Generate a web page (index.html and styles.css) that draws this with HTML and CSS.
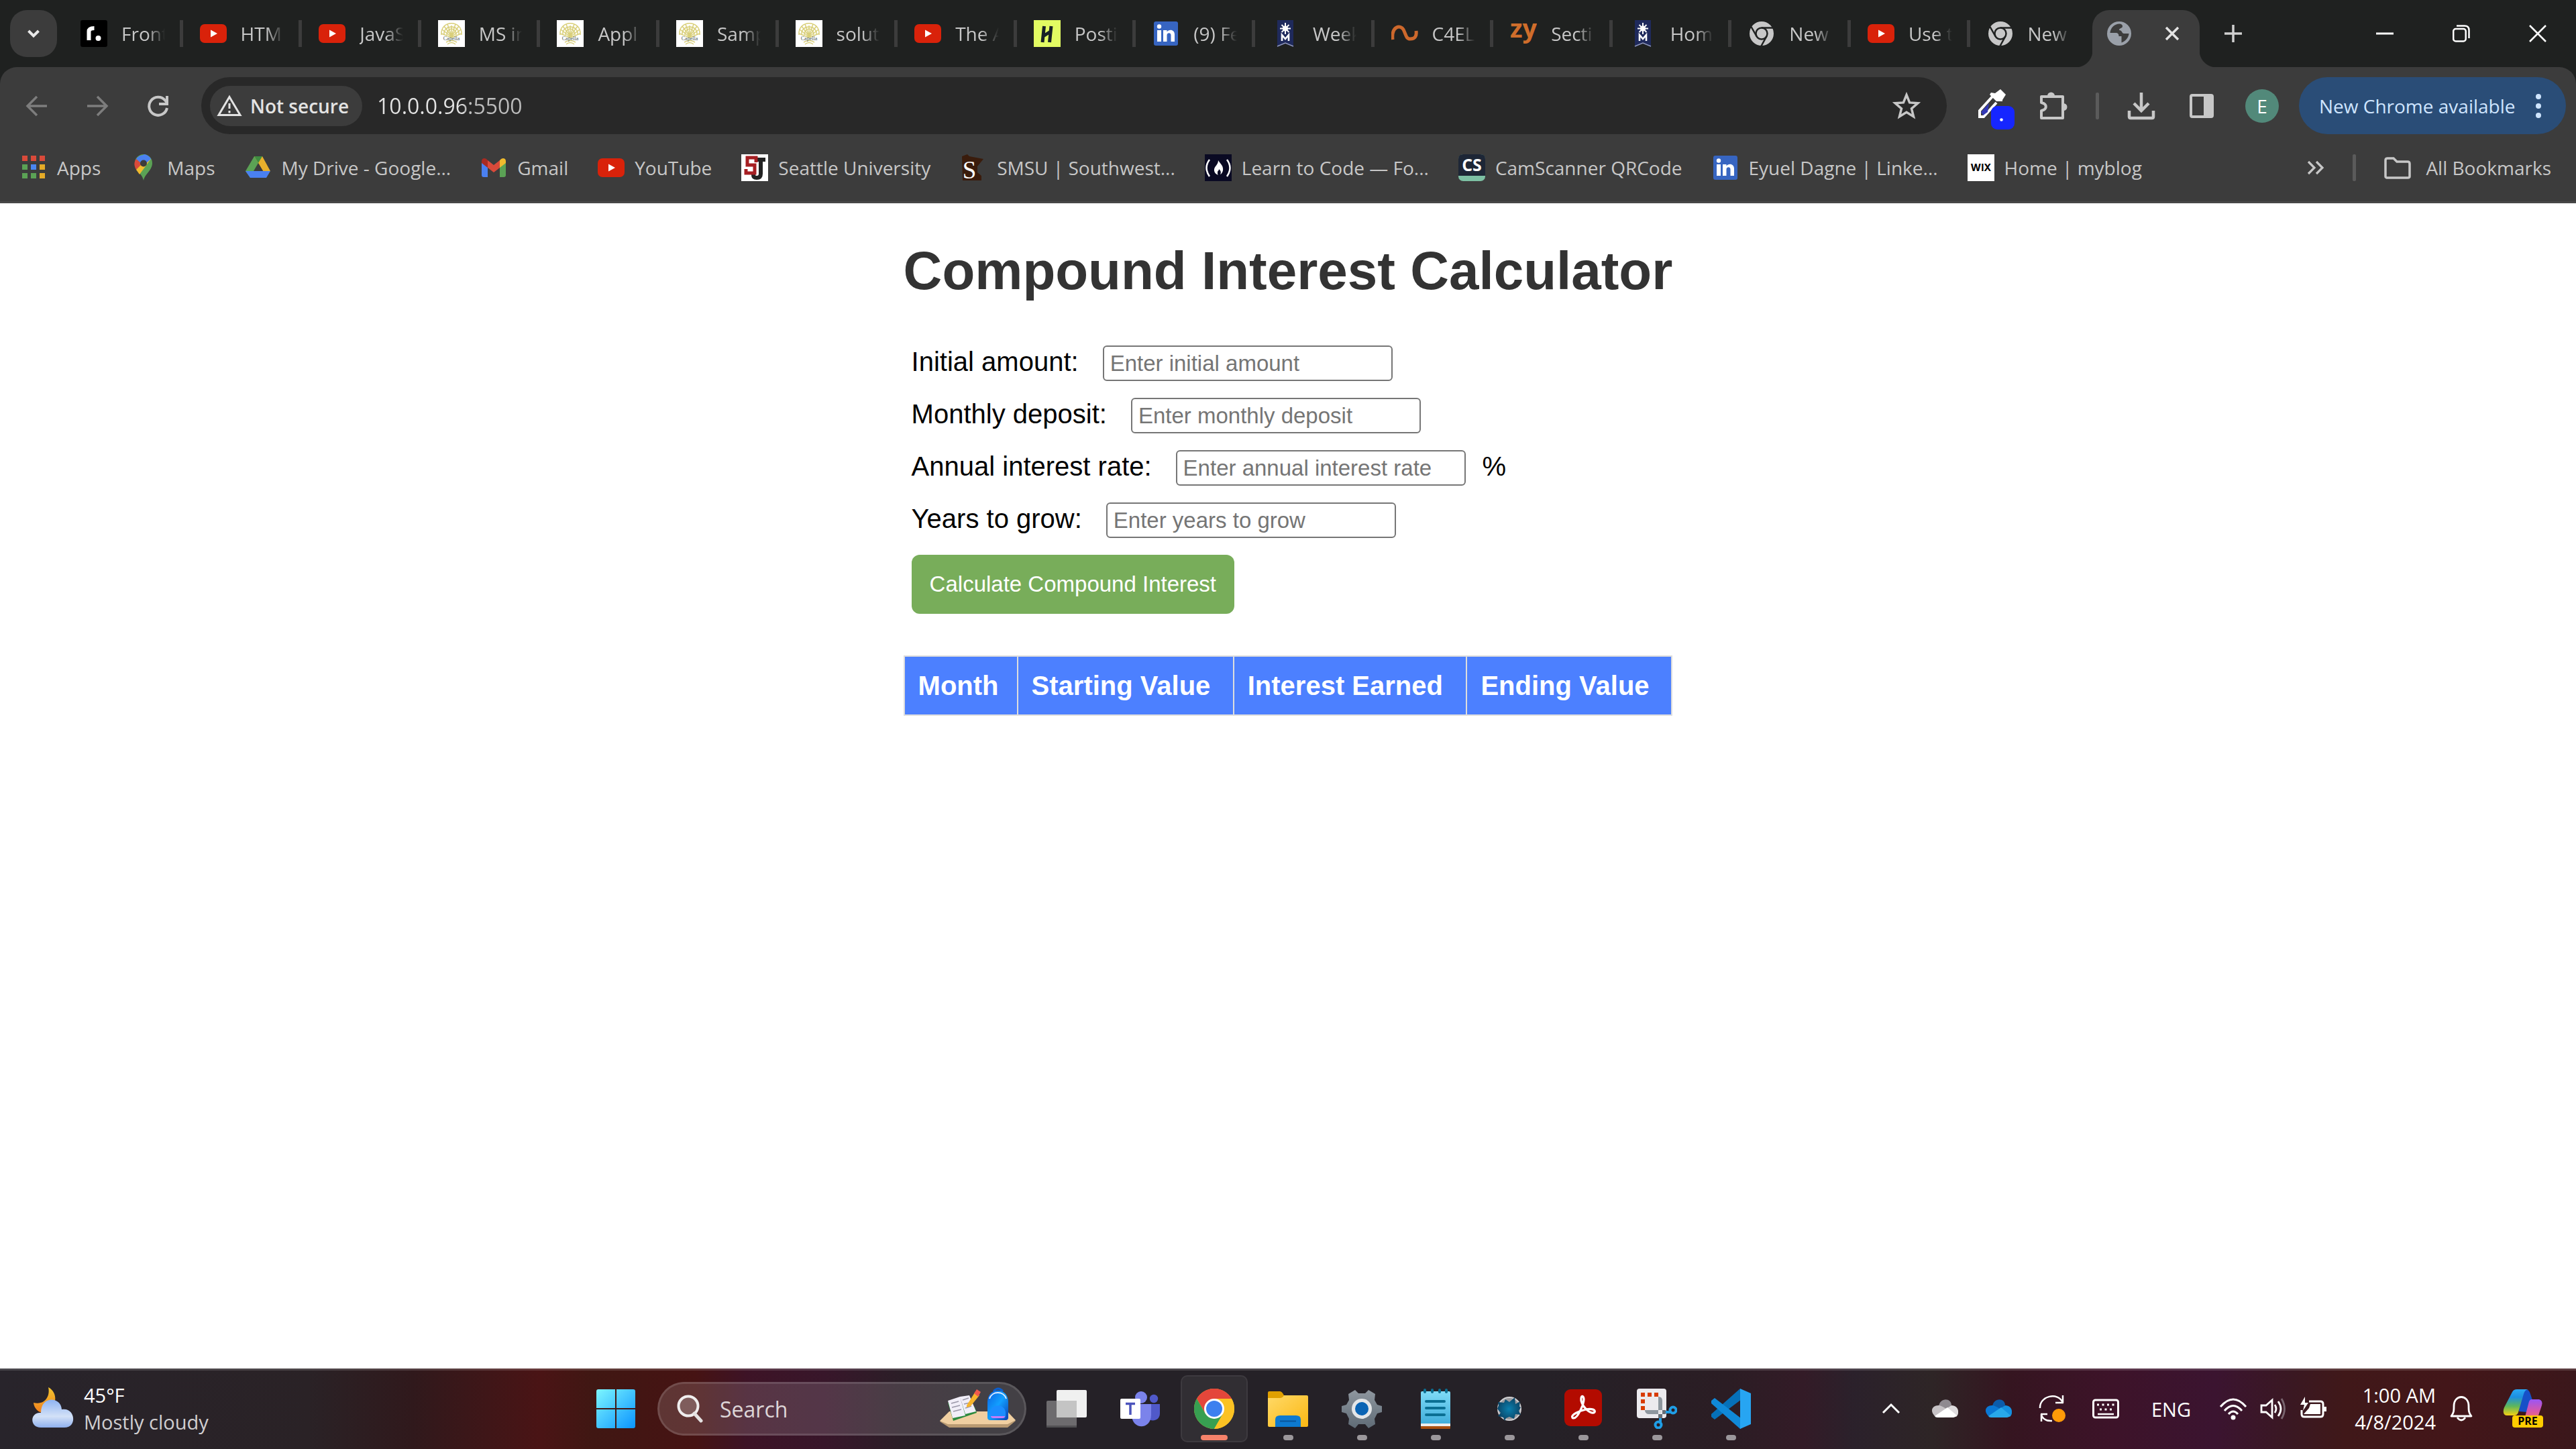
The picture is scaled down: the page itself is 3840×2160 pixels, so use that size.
FILE: index.html
```html
<!DOCTYPE html>
<html lang="en">
<head>
<meta charset="utf-8">
<title>Compound Interest Calculator</title>
<link rel="stylesheet" href="styles.css">
</head>
<body>
<svg class="defs" width="0" height="0" aria-hidden="true">
  <defs>
    <linearGradient id="gWin" x1="0" y1="0" x2="1" y2="1"><stop offset="0" stop-color="#7df6ff"/><stop offset="1" stop-color="#0a94ff"/></linearGradient>
    <linearGradient id="gCloud" x1="0" y1="0" x2="0" y2="1"><stop offset="0" stop-color="#8fb4f2"/><stop offset=".6" stop-color="#d3e1f7"/><stop offset="1" stop-color="#8fb0ee"/></linearGradient>
    <linearGradient id="gMoon" x1="0" y1="0" x2="0" y2="1"><stop offset="0" stop-color="#f3c530"/><stop offset="1" stop-color="#ef7d1c"/></linearGradient>
    <linearGradient id="gFold" x1="0" y1="0" x2="1" y2="1"><stop offset="0" stop-color="#ffd968"/><stop offset="1" stop-color="#fbb813"/></linearGradient>
    <linearGradient id="gNote" x1="0" y1="0" x2="0" y2="1"><stop offset="0" stop-color="#7fdbf7"/><stop offset="1" stop-color="#41aedb"/></linearGradient>
    <linearGradient id="gBag" x1="0" y1="0" x2="1" y2="1"><stop offset="0" stop-color="#0a5ee0"/><stop offset=".5" stop-color="#12a0ff"/><stop offset="1" stop-color="#0a3fb5"/></linearGradient>
    <linearGradient id="gGear" x1="0" y1="0" x2="0" y2="1"><stop offset="0" stop-color="#8f979f"/><stop offset="1" stop-color="#5f6b76"/></linearGradient>
    <radialGradient id="gLeaf"><stop offset="0" stop-color="#0b7fae"/><stop offset="1" stop-color="#0b4668"/></radialGradient>
    <linearGradient id="gCopA" x1="0" y1="0" x2="0" y2="1"><stop offset="0" stop-color="#2aa8f5"/><stop offset=".3" stop-color="#1c8fe0"/><stop offset=".65" stop-color="#5fb75a"/><stop offset="1" stop-color="#f6cf13"/></linearGradient>
    <linearGradient id="gCopB" x1="0" y1="0" x2="0" y2="1"><stop offset="0" stop-color="#9a55f5"/><stop offset=".5" stop-color="#d857a8"/><stop offset="1" stop-color="#f88048"/></linearGradient>

    <symbol id="youtube" viewBox="0 0 40 40"><rect y="6" width="40" height="28" rx="7" fill="#d9220a"/><path d="M16 14.500v11l10-5.500z" fill="#fff"/></symbol>
    <symbol id="capella" viewBox="0 0 40 40"><path fill="#fff" d="M0 0h40v40H0z"/><g fill="none" stroke="#d9cf7a" stroke-width="1.500"><path d="M20 26V8M20 24L9 9M20 24L31 9M20 24L14 6M20 24L26 6M20 25L6 14M20 25L34 14M20 26L5 20M20 26L35 20"/><path d="M5 22C3 -1 37 -1 35 22M9 22C7 6 33 6 31 22M13 22c0-12 14-12 14 0M12 33q8-5 16 0M14 36q6-5 12 0"/></g><text x="20" y="30" font-size="8" text-anchor="middle" fill="#4a5a55" font-family="Liberation Serif, serif">Capella</text></symbol>
    <symbol id="linkedin" viewBox="0 0 40 40"><rect x="2" y="2" width="36" height="36" rx="3" fill="#3765c1"/><path fill="#fff" d="M7 15h6v17H7zM16 15h5.500v2.500c3-4.500 11.500-4 11.500 4V32h-5.500v-9.500c0-4.500-6-4-6 0V32H16z"/><circle cx="10" cy="9.500" r="3.200" fill="#fff"/></symbol>
    <symbol id="metro" viewBox="0 0 40 40"><path fill="#1f2a5c" d="M8 0h24v40l-12-5-12 5z"/><path d="M20 4v17M12 12.500h16M14.500 7l11 11M25.500 7l-11 11" stroke="#fff" stroke-width="2"/><circle cx="20" cy="12.500" r="4" fill="#fff"/><path d="M15 31v-9l5 6 5-6v9" fill="none" stroke="#fff" stroke-width="2.600"/><path d="M8 39l12-5 12 5" fill="none" stroke="#8f96b8" stroke-width="1.500"/></symbol>
    <symbol id="chromegrey" viewBox="0 0 40 40"><circle cx="20" cy="20" r="18" fill="#c7c7c7"/><g fill="none" stroke="#1f2120" stroke-width="2.500"><circle cx="20" cy="20" r="8.500"/><path d="M20 11.500h17M12.600 24.200L4.500 10M27.400 24.200L19.500 38.500"/></g></symbol>
  </defs>
</svg>

<header class="browser">
  <div class="titlebar">
    <button class="tab-search" aria-label="Search tabs"><svg width="20" height="20" viewBox="0 0 20 20"><path d="M2.500 6l7.500 7.500L17.500 6" fill="none" stroke="#e8e8e8" stroke-width="4"/></svg></button>
    <nav class="tabs">
      <button class="tab"><svg class="ico" viewBox="0 0 40 40"><rect width="40" height="40" rx="3"/><path d="M12.500 30V17q0-5 8-5" fill="none" stroke="#fff" stroke-width="6"/><circle cx="26.500" cy="27" r="4" fill="#fff"/></svg><span>Front</span></button>
      <button class="tab"><svg class="ico"><use href="#youtube"/></svg><span>HTM</span></button>
      <button class="tab"><svg class="ico"><use href="#youtube"/></svg><span>JavaS</span></button>
      <button class="tab"><svg class="ico"><use href="#capella"/></svg><span>MS in</span></button>
      <button class="tab"><svg class="ico"><use href="#capella"/></svg><span>Appl</span></button>
      <button class="tab"><svg class="ico"><use href="#capella"/></svg><span>Samp</span></button>
      <button class="tab"><svg class="ico"><use href="#capella"/></svg><span>solut</span></button>
      <button class="tab"><svg class="ico"><use href="#youtube"/></svg><span>The A</span></button>
      <button class="tab"><svg class="ico" viewBox="0 0 40 40"><path fill="#e2fb62" d="M0 0h40v40H0z"/><path d="M15.500 9l-2.500 24M26 9l-2.500 24M14 24l11-7" stroke="#172026" stroke-width="5"/></svg><span>Posti</span></button>
      <button class="tab"><svg class="ico"><use href="#linkedin"/></svg><span>(9) Fe</span></button>
      <button class="tab"><svg class="ico"><use href="#metro"/></svg><span>Week</span></button>
      <button class="tab"><svg class="ico" viewBox="0 0 40 40"><path d="M2 29C0 8 14 7 18 14c4 8 4 14 10 14 8 0 10-5 9-12" fill="none" stroke="#cd682c" stroke-width="5"/></svg><span>C4EL</span></button>
      <button class="tab"><svg class="ico" viewBox="0 0 40 40"><text x="20" y="26" font-size="38" font-weight="700" font-family="Open Sans, sans-serif" text-anchor="middle" fill="#cf6d2b">zy</text></svg><span>Secti</span></button>
      <button class="tab"><svg class="ico"><use href="#metro"/></svg><span>Hom</span></button>
      <button class="tab"><svg class="ico"><use href="#chromegrey"/></svg><span>New</span></button>
      <button class="tab"><svg class="ico"><use href="#youtube"/></svg><span>Use t</span></button>
      <button class="tab"><svg class="ico"><use href="#chromegrey"/></svg><span>New</span></button>
    </nav>
    <div class="tab-active">
      <svg class="ico" viewBox="0 0 40 40"><circle cx="20" cy="20" r="18" fill="#9aa0a9"/><path d="M21 5.500c-9 0-14 7-14.500 13.500h8c4 0 5 2 5 5h4v9.500C30 31 34 26 34.500 20H27c-3 0-2.500-5-7-5 0-4 5-2 5-6 0-2-1.500-3-4-3.500z" fill="#3c3c3c"/></svg>
      <button class="plain" aria-label="Close tab"><svg width="22" height="22" viewBox="0 0 22 22"><path d="M2 2l18 18M20 2L2 20" stroke="#e3e3e3" stroke-width="3.500"/></svg></button>
    </div>
    <button class="plain new-tab" aria-label="New tab"><svg width="26" height="26" viewBox="0 0 26 26"><path d="M13 0v26M0 13h26" stroke="#d0d0d0" stroke-width="3.500"/></svg></button>
    <div class="window-buttons">
      <button class="plain" aria-label="Minimize"><svg width="26" height="26" viewBox="0 0 26 26"><path d="M0 13h26" stroke="#fff" stroke-width="3"/></svg></button>
      <button class="plain" aria-label="Restore"><svg width="26" height="26" viewBox="0 0 26 26"><rect x="1.200" y="6" width="18.500" height="18.500" rx="3.500" fill="none" stroke="#fff" stroke-width="2.500"/><path d="M6 1.500h12q6.500 0 6.500 6.500v12" fill="none" stroke="#fff" stroke-width="2.500"/></svg></button>
      <button class="plain" aria-label="Close"><svg width="26" height="26" viewBox="0 0 26 26"><path d="M1 1l24 24M25 1L1 25" stroke="#fff" stroke-width="2.500"/></svg></button>
    </div>
  </div>

  <div class="toolbar">
    <div class="address-row">
      <div class="nav-buttons">
        <button class="plain tool" aria-label="Back"><svg width="40" height="40" viewBox="0 0 40 40"><path d="M35 20H7M20 6L6 20l14 14" fill="none" stroke="#7d7d7d" stroke-width="3.500"/></svg></button>
        <button class="plain tool" aria-label="Forward"><svg width="40" height="40" viewBox="0 0 40 40"><path d="M5 20h28M20 6l14 14-14 14" fill="none" stroke="#7d7d7d" stroke-width="3.500"/></svg></button>
        <button class="plain tool" aria-label="Reload"><svg width="40" height="40" viewBox="0 0 40 40"><path d="M34 23A13.500 13.500 0 1 1 31 11.500L34 15" fill="none" stroke="#c7c7c7" stroke-width="4"/><path d="M34 5v12H22" fill="none" stroke="#c7c7c7" stroke-width="4"/></svg></button>
      </div>
      <div class="omnibox">
        <button class="chip"><svg width="38" height="38" viewBox="0 0 38 38"><path d="M19 5.500L35 32.500H3z" fill="none" stroke="#e3e3e3" stroke-width="3"/><path d="M19 15v8M19 26v3.500" stroke="#e3e3e3" stroke-width="3"/></svg>Not secure</button>
        <input class="url" type="text" aria-label="Address" value="10.0.0.96:5500">
        <button class="plain star" aria-label="Bookmark this page"><svg width="42" height="42" viewBox="0 0 42 42"><path d="M21 4.500l4.600 11.400 12.300.9-9.400 8 3 12L21 30.300 10.500 36.800l3-12-9.400-8 12.300-.9z" fill="none" stroke="#c7c7c7" stroke-width="3.500"/></svg></button>
      </div>
      <div class="extras">
        <button class="plain tool" aria-label="Color picker"><svg width="70" height="70" viewBox="0 0 70 70"><path d="M34 21L15 42v9h6l19-21" fill="none" stroke="#fff" stroke-width="4"/><path d="M17 44l12-13-2 13-7 5z" fill="#3338b5"/><path d="M38 16l8-6 8 8-5 8v2h-9l-10-10 2-3z" fill="#fff"/><rect x="32" y="35" width="35" height="35" rx="9" fill="#1626ff"/><circle cx="47.500" cy="55.500" r="2.300" fill="#fff"/></svg></button>
        <button class="plain tool" aria-label="Extensions"><svg width="44" height="44" viewBox="0 0 44 44"><path d="M4 8h32v32H4V29c9-2 9-10 0-12z" fill="none" stroke="#c7c7c7" stroke-width="4" stroke-linejoin="round"/><path d="M13 7a5.500 5.500 0 0 1 11 0zM37 18a5.500 5.500 0 0 1 0 11z" fill="#c7c7c7"/></svg></button>
        <span class="divider"></span>
        <button class="plain tool" aria-label="Downloads"><svg width="42" height="42" viewBox="0 0 42 42"><path d="M21 1v26M10 17l11 11 11-11" fill="none" stroke="#c7c7c7" stroke-width="4.500"/><path d="M3 28v9q0 2 2 2h32q2 0 2-2v-9" fill="none" stroke="#c7c7c7" stroke-width="4.500"/></svg></button>
        <button class="plain tool" aria-label="Side panel"><svg width="38" height="38" viewBox="0 0 38 38"><rect x="3" y="3" width="32" height="32" rx="2" fill="none" stroke="#c7c7c7" stroke-width="4"/><path fill="#c7c7c7" d="M22 3h13v32H22z"/></svg></button>
        <button class="plain tool" aria-label="Profile"><span class="avatar">E</span></button>
        <button class="update">New Chrome available<svg width="10" height="50" viewBox="0 0 10 50"><g fill="#cfe5ff"><circle cx="5" cy="11" r="4"/><circle cx="5" cy="25" r="4"/><circle cx="5" cy="39" r="4"/></g></svg></button>
      </div>
    </div>

    <nav class="bookmarks">
      <a href="#apps"><svg class="ico" viewBox="0 0 40 40"><g fill="#d94a3a"><path d="M3 2h8v8H3zM16 2h8v8h-8zM29 2h8v8h-8z"/></g><path fill="#5ba255" d="M3 15h8v8H3zM3 28h8v8H3zM16 28h8v8h-8z"/><path fill="#4a86ef" d="M16 15h8v8h-8z"/><path fill="#e5ab27" d="M29 15h8v8h-8zM29 28h8v8h-8z"/></svg>Apps</a>
      <a href="#maps"><svg class="ico" viewBox="0 0 40 40"><path d="M20 39c-2-10-13-15-13-26a13 13 0 0 1 26 0c0 11-11 16-13 26z" fill="#5ba255"/><path d="M9 7a13 13 0 0 1 22 0l-11 10z" fill="#4a80f0"/><path d="M9 7l9 8-9 8C5 16 6 11 9 7z" fill="#d94a3a"/><path d="M9 23l16-16 6 0-17 23z" fill="#f0bb2e"/><path d="M20 0a13 13 0 0 1 11 7L20 17z" fill="#4a80f0"/><circle cx="20" cy="13.500" r="5" fill="#3c3c3c"/></svg>Maps</a>
      <a href="#drive"><svg class="ico" viewBox="0 0 40 40"><path d="M14 3h6l4 7L8 35 1 25z" fill="#5ba255"/><path d="M14 3h12l12 22H27z" fill="#e9b02c"/><path d="M14 3h12l-6 10z" fill="#3f8c41"/><path d="M1 25h37l-6 10H8z" fill="#4a80f0"/><path d="M20 13l7 12H13z" fill="#3c3c3c"/></svg>My Drive - Google...</a>
      <a href="#gmail"><svg class="ico" viewBox="0 0 40 40"><path fill="#4a80f0" d="M2 12l9 7v15H5q-3 0-3-3z"/><path fill="#5ba255" d="M38 12l-9 7v15h6q3 0 3-3z"/><path fill="#d94a3a" d="M11 9l9 7 9-7v11l-9 7-9-7z"/><path fill="#a82b22" d="M2 10c0-4 4-5 7-3l2 2v11l-9-7z"/><path fill="#f0bb2e" d="M38 10c0-4-4-5-7-3l-2 2v11l9-7z"/></svg>Gmail</a>
      <a href="#youtube-home"><svg class="ico"><use href="#youtube"/></svg>YouTube</a>
      <a href="#seattle"><svg class="ico" viewBox="0 0 40 40"><path fill="#fff" d="M0 0h40v40H0z"/><path d="M18 28v3q0 4 5 4 6 0 6-6V8M24 8h12" fill="none" stroke="#222" stroke-width="6"/><path d="M22 12V5H9v11h11v12H7v-6" fill="none" stroke="#a51e22" stroke-width="5"/></svg>Seattle University</a>
      <a href="#smsu"><svg class="ico" viewBox="0 0 40 40"><path d="M3 3l8-3 3 3 21 4-9 11v9l6 5v7H4z" fill="#3a1c0c"/><text x="14" y="36" font-size="37" font-family="Liberation Serif, serif" text-anchor="middle" fill="#fff">S</text></svg>SMSU | Southwest...</a>
      <a href="#learn"><svg class="ico" viewBox="0 0 40 40"><path fill="#0a0a23" d="M0 0h40v40H0z"/><path d="M7 8q-9 12 0 25M33 8q9 12 0 25" fill="none" stroke="#fff" stroke-width="2.500"/><path d="M20 9c3 5 8 8 7 15-1 5-4 6-4 6 2-4 0-6-2-8 0 3-2 2-2 5 0 2 0 3 1 4-6-2-8-8-4-13 2-3 4-5 4-9z" fill="#fff"/></svg>Learn to Code — Fo...</a>
      <a href="#camscanner"><svg class="ico" viewBox="0 0 40 40"><rect width="40" height="40" rx="7" fill="#7dc0a4"/><path fill="#1d2636" d="M0 32V7q0-7 7-7h26q7 0 7 7v25z"/><text x="20" y="25" font-size="25" font-weight="700" font-family="Open Sans, sans-serif" text-anchor="middle" fill="#fff">CS</text></svg>CamScanner QRCode</a>
      <a href="#profile"><svg class="ico"><use href="#linkedin"/></svg>Eyuel Dagne | Linke...</a>
      <a href="#myblog"><svg class="ico" viewBox="0 0 40 40"><path fill="#fff" d="M0 0h40v40H0z"/><text x="20" y="25" font-size="15" font-weight="700" font-family="Inter, sans-serif" text-anchor="middle">WIX</text></svg>Home | myblog</a>
      <div class="bookmarks-end">
        <button class="plain" aria-label="More bookmarks"><svg width="26" height="26" viewBox="0 0 26 26"><path d="M2 4l9 9-9 9M14 4l9 9-9 9" fill="none" stroke="#c7c7c7" stroke-width="3.200"/></svg></button>
        <span class="divider"></span>
        <a class="all" href="#all"><svg class="ico" viewBox="0 0 40 40"><path d="M2 33V9q0-3 3-3h9l5 5h16q3 0 3 3v19q0 2-3 2H5q-3 0-3-2z" fill="none" stroke="#c7c7c7" stroke-width="3.500"/></svg>All Bookmarks</a>
      </div>
    </nav>
  </div>
</header>

<main class="page">
  <div class="calculator">
    <h1>Compound Interest Calculator</h1>
    <form class="fields">
      <div class="field"><label for="initial">Initial amount:</label><input id="initial" type="text" placeholder="Enter initial amount"></div>
      <div class="field"><label for="monthly">Monthly deposit:</label><input id="monthly" type="text" placeholder="Enter monthly deposit"></div>
      <div class="field"><label for="rate">Annual interest rate:</label><input id="rate" type="text" placeholder="Enter annual interest rate"><span class="unit">%</span></div>
      <div class="field"><label for="years">Years to grow:</label><input id="years" type="text" placeholder="Enter years to grow"></div>
      <button class="calculate" type="button">Calculate Compound Interest</button>
    </form>
    <table class="results">
      <thead><tr><th scope="col">Month</th><th scope="col">Starting Value</th><th scope="col">Interest Earned</th><th scope="col">Ending Value</th></tr></thead>
    </table>
  </div>
</main>

<footer class="taskbar">
  <div class="weather">
    <svg width="64" height="64" viewBox="0 0 64 64"><path d="M25 0c3 12-4 27-22 23 1 12 14 20 24 12S40 8 25 0z" fill="url(#gMoon)"/><path d="M14 60C-4 60-2 36 14 38 14 12 44 14 45 33c20-4 24 27 4 27z" fill="url(#gCloud)"/></svg>
    <div><div class="temp">45°F</div><div class="sky">Mostly cloudy</div></div>
  </div>
  <button class="app" aria-label="Start"><svg width="58" height="58" viewBox="0 0 58 58"><path fill="url(#gWin)" d="M3 0h25v28H0V3q0-3 3-3zM30 0h25q3 0 3 3v25H30zM0 30h28v28H3q-3 0-3-3zM30 30h28v25q0 3-3 3H30z"/></svg></button>
  <div class="search">
    <svg width="40" height="42" viewBox="0 0 40 42"><circle cx="17" cy="17" r="14.500" fill="rgba(255,255,255,.2)" stroke="#f0eeee" stroke-width="4"/><path d="M26 28l10 11" stroke="#e5e2e2" stroke-width="5" stroke-linecap="round"/></svg>
    <input type="text" placeholder="Search" aria-label="Search">
    <svg width="114" height="64" viewBox="0 0 114 64"><path d="M0 51l14-14h88l11 13-12 10H14z" fill="#b99a72"/><path d="M0 50l14-14h86l13 13-12 6H12z" fill="#f0cfa1"/><path d="M12 23l8 27 35-12-3-9z" fill="#2c8a3e"/><path d="M12 20l18-6 8 28-19 4zM30 14l14-2 10 24-16 4z" fill="#f1eef8"/><path d="M17 24l11-3M18 30l12-3M20 36l12-3M34 19l9-3M36 25l9-2M38 31l9-3" stroke="#9a97a8" stroke-width="1.500"/><path d="M40 27l12-19 7 4-13 16-6 2z" fill="#f7b42c"/><path d="M51 9l4-6 6 4-4 7z" fill="#ef5a4c"/><path d="M80 6q7-8 14 0" fill="none" stroke="#0a5fd0" stroke-width="3"/><path d="M71 45V22c0-23 31-23 31 0v23q0 4-4 4H75q-4 0-4-4z" fill="url(#gBag)"/><path d="M74 17c4-12 21-12 25 0" fill="none" stroke="#dcecff" stroke-width="2"/><path d="M75 43v-6c2-13 21-13 23 0v6q0 3-4 3H79q-4 0-4-3z" fill="#1b8dff"/><path d="M76 43h21q0 3-4 3H80q-4 0-4-3z" fill="#c77cf8"/></svg>
  </div>
  <div class="apps">
    <button class="app" aria-label="Task view"><svg width="60" height="60" viewBox="0 0 60 60"><rect x="15" y="2" width="45" height="41" rx="2" fill="#f0f0f0"/><rect x="0" y="18" width="45" height="40" rx="2" fill="#6d6b6e"/><path fill="#c4c4c4" d="M15 18h30v25H15z"/><path fill="#515053" d="M0 55h45v3H0z"/></svg></button>
    <button class="app" aria-label="Teams"><svg width="60" height="60" viewBox="0 0 60 60"><circle cx="31" cy="13" r="9" fill="#7b83eb"/><circle cx="50" cy="15" r="6.200" fill="#5059c9"/><path d="M38 23h21v14c0 14-21 14-21 0z" fill="#5059c9"/><path d="M17 23h29v16c0 23-29 23-29 0z" fill="#7b83eb"/><rect y="15" width="30" height="30" rx="2" fill="#fff"/><path d="M8 22.500h14M15 22v17" stroke="#4b53bc" stroke-width="3.500"/></svg></button>
    <button class="app current running" aria-label="Chrome"><svg width="60" height="60" viewBox="0 0 60 60"><circle cx="30" cy="30" r="30" fill="#fbbf16"/><path d="M4 15A30 30 0 0 1 56 15H30L17 37.500z" fill="#e33b2e"/><path d="M4 15L17 37.500 43 37.500 30 60A30 30 0 0 1 4 15z" fill="#2b9a47"/><path d="M43 37.500L30 60A30 30 0 0 0 56 15H30z" fill="#fbbf16"/><circle cx="30" cy="30" r="15" fill="#fff"/><circle cx="30" cy="30" r="12" fill="#3079ee"/></svg></button>
    <button class="app running" aria-label="File Explorer"><svg width="60" height="60" viewBox="0 0 60 60"><path d="M0 6q0-2 2-2h16q3 0 6 6h34v20H0z" fill="#e0a000"/><path d="M0 14h18q4 0 6-4h34q2 0 2 2v43q0 2-2 2H2q-2 0-2-2z" fill="url(#gFold)"/><path d="M11 57V46q0-6 7-6h24q7 0 7 6v11z" fill="#0d7ad0"/><path d="M18 48.500h24" stroke="#08559c" stroke-width="2"/></svg></button>
    <button class="app running" aria-label="Settings"><svg width="60" height="60" viewBox="0 0 60 60"><path d="M20 2l5 5h10l5-5 10 6-1 9 4 7 7 2v9l-7 2-4 8 1 8-10 6-5-6H25l-5 6-10-6 1-8-4-8-7-2v-9l7-2 4-7-1-9z" fill="url(#gGear)"/><circle cx="30" cy="30" r="15" fill="#e4e6e8"/><circle cx="30" cy="30" r="10" fill="#0b64b4"/></svg></button>
    <button class="app running" aria-label="Notepad"><svg width="60" height="60" viewBox="0 0 60 60"><path fill="#a94f10" d="M8 54h44v5q0 1-1 1H9q-1 0-1-1z"/><path fill="#eee" d="M8 50h44v6H8z"/><path d="M8 6q0-2 2-2h40q2 0 2 2v46H8z" fill="url(#gNote)"/><g stroke="#0b6f93" stroke-width="4" stroke-linecap="round"><path d="M16 19h27M16 29h27M16 39h27M14 2v3M25 2v3M36 2v3M46 2v3"/></g></svg></button>
    <button class="app running" aria-label="Maple"><svg width="60" height="60" viewBox="0 0 60 60"><circle cx="30" cy="30" r="17" fill="#9a9a9e" stroke="#d0cfd2" stroke-width="2"/><path d="M38 13l1 10 7-4-1 8 2 1-3 5 3 6-8-1-2 7-7-3-5 2-2 4-2-5-8-2 4-5-5-6 2-5-1-5 9 1 2-5 6 4z" fill="url(#gLeaf)"/></svg></button>
    <button class="app running" aria-label="Acrobat"><svg width="60" height="60" viewBox="0 0 60 60"><rect x="2" y="1" width="56" height="55" rx="9" fill="#b30b00"/><path d="M14 43c-3-4 11-10 20-12s15 1 13 4c-4 4-17-5-20-17-1-9 4-8 4-2 0 7-9 28-15 28-1 0-2 0-2-1z" fill="none" stroke="#fff" stroke-width="3.200"/></svg></button>
    <button class="app running" aria-label="Snipping Tool"><svg width="60" height="60" viewBox="0 0 60 60"><rect width="44" height="44" rx="4" fill="#eceaee"/><path fill="#d83b01" d="M6 6h6v6H6zM16 6h6v6h-6zM26 6h6v6h-6zM6 16h6v6H6zM6 26h6v6H6z"/><path d="M32 12q6 0 6 6v20q0 4-6 4zM12 32v1q1 5 6 5h24v-6z" fill="#8f979f"/><path fill="#666e76" d="M38 32h5v6h-5zM32 38h6v6h-6z"/><g fill="none" stroke="#1f9ee6" stroke-width="4"><circle cx="54" cy="32" r="4.500"/><circle cx="32" cy="54" r="4.500"/><path d="M43 35h9M35 44v8"/></g><circle cx="35" cy="35" r="2" fill="#ddd"/></svg></button>
    <button class="app running" aria-label="Visual Studio Code"><svg width="60" height="60" viewBox="0 0 60 60"><path d="M44 0L1 38v4l5 4 40-30z" fill="#0670b8"/><path d="M1 18l5-4 39 30v16h-1L1 22z" fill="#1089d8"/><path d="M44 0l16 7v46l-16 7V0z" fill="#27a5f2"/></svg></button>
  </div>
  <div class="tray">
    <button class="tray-btn" aria-label="Show hidden icons"><svg width="30" height="30" viewBox="0 0 30 30"><path d="M3 21L15 9l12 12" fill="none" stroke="#fff" stroke-width="3"/></svg></button>
    <button class="tray-btn" aria-label="OneDrive personal"><svg width="40" height="30" viewBox="0 0 40 30"><path d="M11 12C12-2 30-2 30 10l-10 8z" fill="#8f8a90"/><path d="M5 26C-6 14 8 6 17 12l14 8z" fill="#c6c2c5"/><path d="M22 15l8-5c12 0 12 14 7 17z" fill="#dedbdd"/><path d="M5 26l19-13 14 12q-2 3-5 3H9q-3 0-4-2z" fill="#fff"/></svg></button>
    <button class="tray-btn" aria-label="OneDrive work"><svg width="40" height="30" viewBox="0 0 40 30"><path d="M11 12C12-2 30-2 30 10l-10 8z" fill="#0b5cab"/><path d="M5 26C-6 14 8 6 17 12l14 8z" fill="#0a78d4"/><path d="M22 15l8-5c12 0 12 14 7 17z" fill="#1490df"/><path d="M5 26l19-13 14 12q-2 3-5 3H9q-3 0-4-2z" fill="#28a8ea"/></svg></button>
    <button class="tray-btn" aria-label="Updates"><svg width="42" height="42" viewBox="0 0 42 42"><path d="M3 20C2 2 30-5 37 12V1M38 12H26M21 39C10 40 5 33 5 29v11M4 29h10" fill="none" stroke="#fff" stroke-width="2.500"/><circle cx="31" cy="31" r="10" fill="#ff9a08"/></svg></button>
    <button class="tray-btn" aria-label="Touch keyboard"><svg width="40" height="30" viewBox="0 0 40 30"><rect x="1.500" y="2" width="37" height="26" rx="3" fill="none" stroke="#fff" stroke-width="3"/><path d="M7 9h26M11 16h20" stroke="#fff" stroke-width="3" stroke-dasharray="3 4.500"/><path d="M8 23h24" stroke="#fff" stroke-width="2.500"/></svg></button>
    <button class="lang">ENG</button>
    <button class="status" aria-label="Network, sound and battery"><svg width="42" height="36" viewBox="0 0 42 36"><g fill="none" stroke="#fff" stroke-width="3"><path d="M2 15q19-22 38 0M8 21q13-15 26 0M14 26q7-8 14 0"/></g><circle cx="21" cy="31" r="3.500" fill="#fff"/></svg><svg width="42" height="36" viewBox="0 0 42 36"><path d="M3 13h7l9-8v26l-9-8H3z" fill="none" stroke="#fff" stroke-width="2.800"/><path d="M23 12q4 6 0 12M28 7q8 11 0 22" fill="none" stroke="#fff" stroke-width="2.800"/><path d="M33 3q9 15 0 30" fill="none" stroke="#7a6670" stroke-width="2.800"/></svg><svg width="42" height="36" viewBox="0 0 42 36"><path d="M14 7h17q4 0 4 4v15q0 4-4 4H7q-4 0-4-4v-6" fill="none" stroke="#fff" stroke-width="3"/><path d="M16 11h15v15H6l8-9z" fill="#fff"/><path d="M36 15h4v7h-4z" fill="#fff"/><path d="M8 0L1 12h6l-2 9 8-12H8z" fill="#fff"/></svg></button>
    <button class="clock"><span>1:00 AM</span><span>4/8/2024</span></button>
    <button class="bell" aria-label="Notifications"><svg width="36" height="40" viewBox="0 0 36 40"><path d="M3 31c4-5 4-8 4-15 0-18 22-18 22 0 0 7 0 10 4 15z" fill="none" stroke="#fff" stroke-width="2.800" stroke-linejoin="round"/><path d="M12 33q6 8 12 0" fill="none" stroke="#fff" stroke-width="2.800"/></svg></button>
    <button class="copilot" aria-label="Copilot"><svg width="60" height="60" viewBox="0 0 60 60"><path d="M26 1h8q5 0 7 7l3 9q1 1 8 1-9 0-12 8l-4 9-12-1z" fill="#1650c8"/><path d="M14 5q2-4 7-4h17q-5 0-7 7l-8 27q-1 5-7 5H6c-6 0-6-7-4-12z" fill="url(#gCopA)"/><path d="M42 16h12q6 2 4 9l-6 18q-3 8-10 8H26q5-2 7-9l5-19q1-6 4-7z" fill="url(#gCopB)"/><rect x="14" y="40" width="46" height="18" rx="4" fill="#fc0"/><text x="37" y="54" font-size="16" font-weight="700" font-family="Open Sans, sans-serif" text-anchor="middle">PRE</text></svg></button>
  </div>
</footer>
</body>
</html>
```
FILE: styles.css
```css
* {
  box-sizing: border-box;
}

body {
  margin: 0;
  min-height: 100vh;
  display: flex;
  flex-direction: column;
  background: #fff;
  font-family: "Liberation Sans", Arial, sans-serif;
  font-size: 40px;
}

button,
input {
  font-family: inherit;
  margin: 0;
}

button {
  border: 0;
  background: none;
  padding: 0;
}

svg {
  display: block;
  flex: none;
}

.defs {
  position: absolute;
}

.ico {
  width: 40px;
  height: 40px;
}

.plain {
  display: flex;
  align-items: center;
  justify-content: center;
}

/* Browser frame */

.browser,
.taskbar {
  font-family: "Open Sans", "Noto Sans", sans-serif;
  font-size: 28px;
}

.browser {
  background: #1f2120;
  color: #c7c7c7;
}

.browser button,
.taskbar button {
  font-size: inherit;
  color: inherit;
}

.titlebar {
  display: flex;
  align-items: center;
  height: 100px;
  padding-left: 15px;
}

.tab-search {
  flex: none;
  display: flex;
  align-items: center;
  justify-content: center;
  width: 70px;
  height: 70px;
  border-radius: 25px;
  background: #3c3c3c;
}

.tabs {
  flex: 1;
  min-width: 0;
  display: flex;
  margin: 0 5px 0 10px;
}

.tab {
  flex: 1 1 0;
  min-width: 0;
  height: 40px;
  display: flex;
  align-items: center;
  padding: 0 22px 0 25px;
  gap: 21px;
  border-right: 5px solid #3c3c3c;
}

.tab:last-child {
  border-right-color: transparent;
}

.tab span {
  flex: 1;
  min-width: 0;
  overflow: hidden;
  white-space: nowrap;
  text-align: left;
  line-height: 40px;
  mask-image: linear-gradient(to right, #000 60%, transparent 100%);
}

.tab-active {
  position: relative;
  flex: none;
  align-self: flex-end;
  display: flex;
  align-items: center;
  justify-content: space-between;
  width: 160px;
  height: 85px;
  padding: 0 30px 15px 20px;
  border-radius: 25px 25px 0 0;
  background: #3c3c3c;
}

.tab-active::before,
.tab-active::after {
  content: "";
  position: absolute;
  bottom: 0;
  width: 25px;
  height: 25px;
}

.tab-active::before {
  right: 100%;
  background: radial-gradient(circle at 0 0, transparent 25px, #3c3c3c 26px);
}

.tab-active::after {
  left: 100%;
  background: radial-gradient(circle at 100% 0, transparent 25px, #3c3c3c 26px);
}

.new-tab {
  flex: none;
  width: 70px;
  height: 70px;
  margin: 0 134px 0 15px;
}

.window-buttons {
  flex: none;
  display: flex;
}

.window-buttons button {
  width: 114px;
  height: 100px;
}

.toolbar {
  padding-top: 15px;
  border-bottom: 3px solid #474747;
  border-radius: 25px 25px 0 0;
  background: #3c3c3c;
}

.address-row {
  display: flex;
  align-items: center;
  height: 85px;
  padding: 0 15px 0 20px;
}

.nav-buttons,
.extras {
  display: flex;
  align-items: center;
  gap: 20px;
}

.nav-buttons {
  margin-right: 30px;
}

.extras {
  margin-left: 34px;
}

.tool {
  width: 70px;
  height: 70px;
}

.divider {
  width: 5px;
  height: 40px;
  margin: 0 8px;
  border-radius: 2px;
  background: #5b5b5b;
}

.omnibox {
  flex: 1;
  display: flex;
  align-items: center;
  height: 85px;
  padding: 0 39px 0 13px;
  border-radius: 43px;
  background: #282828;
}

.chip {
  display: flex;
  align-items: center;
  gap: 12px;
  height: 60px;
  padding: 0 20px 0 10px;
  border-radius: 30px;
  background: #3c3c3c;
  font-weight: 600;
}

.browser .chip {
  color: #e3e3e3;
}

.url {
  flex: 1;
  min-width: 0;
  height: 60px;
  padding: 0 0 0 22px;
  border: 0;
  font-size: 32px;
  color: transparent;
  background: linear-gradient(to right, #e3e3e3 152px, #bdbdbd 152px);
  background-clip: text;
}

.avatar {
  width: 50px;
  height: 50px;
  border-radius: 50%;
  background: #52897a;
  color: #fff;
  line-height: 50px;
  text-align: center;
}

.update {
  display: flex;
  align-items: center;
  justify-content: space-between;
  width: 398px;
  height: 85px;
  padding: 0 36px 0 30px;
  border-radius: 43px;
  background: #2a4d77;
  white-space: nowrap;
}

.browser .update {
  color: #cfe5ff;
}

.bookmarks {
  display: flex;
  align-items: center;
  gap: 44px;
  height: 100px;
  padding: 0 37px 0 30px;
}

.bookmarks a {
  display: flex;
  align-items: center;
  gap: 15px;
  color: inherit;
  text-decoration: none;
  white-space: nowrap;
}

.bookmarks-end {
  display: flex;
  align-items: center;
  gap: 34px;
  margin-left: auto;
}

.bookmarks .all {
  gap: 22px;
}

/* Calculator page */

.page {
  flex: 1;
  padding: 55px 40px;
}

.calculator {
  width: fit-content;
  margin: 0 auto;
}

h1 {
  margin: 0 0 65px;
  font-size: 80px;
  line-height: 92px;
  color: #333;
}

.fields {
  display: flex;
  flex-direction: column;
  align-items: flex-start;
  gap: 25px;
  padding: 0 12px;
}

.field {
  display: flex;
  align-items: baseline;
  height: 53px;
  line-height: 46px;
}

.field label {
  margin-right: 36px;
}

.field input {
  width: 432px;
  height: 53px;
  padding: 0 9px;
  border: 2px solid #767676;
  border-radius: 6px;
  font-size: 33px;
}

.field input::placeholder {
  color: #757575;
}

.unit {
  margin-left: 25px;
}

.calculate {
  padding: 25px 27px;
  border-radius: 12px;
  background: #78ad5a;
  color: #fff;
  font-size: 33px;
  line-height: 38px;
}

.results {
  width: 100%;
  margin-top: 62px;
  border-collapse: collapse;
}

.results th {
  padding: 20px;
  border: 2px solid #ddd;
  background: #4c80ff;
  color: #fff;
  line-height: 46px;
  text-align: left;
}

/* Taskbar */

.taskbar {
  display: flex;
  align-items: center;
  height: 120px;
  font-size: 29px;
  color: #fff;
  background: linear-gradient(to right, #28242b 0%, #2a2226 12%, #30191c 16%, #4a1415 21%, #401713 23%, #461313 27%, #3d1326 29%, #38162a 32%, #2b1e27 35%, #252127 38%, #252127 60%, #2b1d24 67%, #331b27 70%, #2b212b 72%, #2e2526 75%, #351520 78%, #3d1329 82%, #3b1430 86%, #3a1822 89%, #401819 91%, #431619 95%, #3b171b 100%);
  box-shadow: inset 0 3px rgba(255, 255, 255, 0.16);
}

.weather {
  width: 863px;
  display: flex;
  align-items: center;
  gap: 14px;
  padding-left: 47px;
  line-height: 40px;
}

.sky {
  color: #d0ced0;
}

.app {
  position: relative;
  display: flex;
  align-items: center;
  justify-content: center;
  width: 110px;
  height: 100px;
}

.search {
  display: flex;
  align-items: center;
  width: 550px;
  height: 80px;
  margin: 0 5px 0 7px;
  padding: 0 12px 0 26px;
  border: 3px solid rgba(255, 255, 255, 0.12);
  border-radius: 40px;
  background: rgba(255, 255, 255, 0.14);
}

.search input {
  flex: 1;
  min-width: 0;
  padding: 0 0 0 24px;
  border: 0;
  background: none;
  font-size: 32px;
}

.search input::placeholder {
  color: #ddd5d7;
}

.apps {
  display: flex;
}

.current::before {
  content: "";
  position: absolute;
  inset: 0 5px;
  border: 2px solid rgba(255, 255, 255, 0.06);
  border-radius: 10px;
  background: rgba(255, 255, 255, 0.06);
}

.running::after {
  content: "";
  position: absolute;
  bottom: 3px;
  width: 15px;
  height: 8px;
  border-radius: 4px;
  background: #9b979b;
}

.current::after {
  width: 40px;
  background: #f5826a;
}

.tray {
  display: flex;
  align-items: center;
  margin-left: auto;
}

.tray button {
  display: flex;
  align-items: center;
  justify-content: center;
  height: 80px;
}

.tray .tray-btn {
  width: 80px;
}

.tray .lang {
  width: 115px;
}

.tray .status {
  width: 190px;
  gap: 18px;
}

.tray .clock {
  flex-direction: column;
  align-items: flex-end;
  width: 147px;
  line-height: 40px;
}

.tray .bell {
  width: 76px;
}

.tray .copilot {
  width: 108px;
  margin-right: 25px;
}
```
